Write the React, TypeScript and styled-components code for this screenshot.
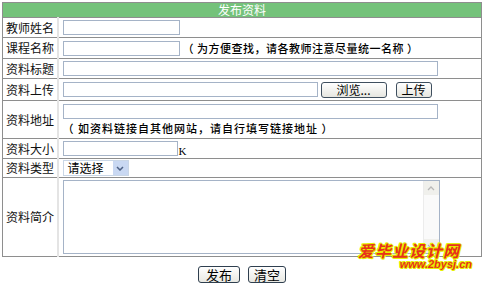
import React from "react";
import styled, { createGlobalStyle } from "styled-components";

const Global = createGlobalStyle`
  html, body { margin: 0; padding: 0; background: #fff; }
  body { font-family: "Noto Sans CJK SC", "Liberation Sans", sans-serif; font-size: 12px; color: #000; }
`;

const Page = styled.div`
  width: 484px;
  padding: 2px 2px 0 2px;
  box-sizing: border-box;
`;

const Wrap = styled.div`
  position: relative;
`;

const Table = styled.table`
  width: 480px;
  border-collapse: collapse;
  border: 1px solid #8e8e8e;
  table-layout: fixed;
`;

const LabelCol = styled.col`
  width: 55px;
`;

const HeadCell = styled.th`
  background: #74c27a;
  color: #fff;
  font-weight: normal;
  font-size: 12px;
  height: 14px;
  line-height: 14px;
  padding: 0;
  text-align: center;
  border-bottom: 1px solid #8e8e8e;
`;

const Row = styled.tr<{ $h: number }>`
  height: ${(p) => p.$h}px;
`;

const Label = styled.td`
  padding: 0 0 0 3px;
  border-right: 1px solid #8e8e8e;
  border-bottom: 1px solid #8e8e8e;
  white-space: nowrap;
  font-size: 12px;
  line-height: 14px;
  vertical-align: middle;
  overflow: hidden;
  color: #111;
`;

const Field = styled.td`
  padding: 0 0 0 4px;
  border-left: 2px solid #e4e4e4;
  border-bottom: 1px solid #8e8e8e;
  vertical-align: middle;
  font-size: 12px;
  line-height: 14px;
`;

const Line = styled.div<{ $gap?: number }>`
  display: flex;
  align-items: center;
  gap: ${(p) => p.$gap ?? 3}px;
`;

const Input = styled.input<{ $w: number }>`
  width: ${(p) => p.$w}px;
  height: 15px;
  box-sizing: border-box;
  border: 1px solid #a5b3c7;
  padding: 0;
  margin: 0;
  background: #fff;
  font-size: 12px;
  display: block;
`;

const Hint = styled.span<{ $ls: number }>`
  font-size: 11px;
  letter-spacing: ${(p) => p.$ls}px;
  white-space: nowrap;
  font-weight: 500;
`;

const HintLine = styled.div`
  margin-top: 2px;
  padding-left: 0;
`;

const Unit = styled.span`
  font-family: "Liberation Serif", serif;
  font-size: 11px;
  margin-top: 4px;
`;

const SmallBtn = styled.button<{ $w: number; $ml?: number }>`
  width: ${(p) => p.$w}px;
  margin-left: ${(p) => p.$ml ?? 0}px;
  height: 16px;
  box-sizing: border-box;
  border: 1px solid #3f4f5f;
  border-radius: 3px;
  background: linear-gradient(#ffffff, #e6e6e0);
  font-family: "Noto Sans CJK SC", sans-serif;
  font-size: 12px;
  line-height: 12px;
  padding: 0;
  color: #000;
  white-space: nowrap;
`;

const Select = styled.div`
  width: 66px;
  height: 16px;
  display: flex;
  align-items: center;
  justify-content: space-between;
  box-sizing: border-box;
  padding-left: 4px;
  font-size: 12px;
  border: 1px solid #c9d6e6;
`;

const Arrow = styled.span`
  width: 15px;
  height: 14px;
  background: #c9d8f2;
  display: flex;
  align-items: center;
  justify-content: center;
`;

const TextArea = styled.div`
  width: 377px;
  height: 74px;
  box-sizing: border-box;
  border: 1px solid #a5b3c7;
  display: flex;
  justify-content: flex-end;
`;

const ScrollBar = styled.div`
  width: 15px;
  height: 100%;
  border-left: 1px solid #ececec;
  display: flex;
  flex-direction: column;
  justify-content: space-between;
  background: #fafafa;
`;

const ScrollBtn = styled.div`
  height: 14px;
  background: #f0f0ec;
  display: flex;
  align-items: center;
  justify-content: center;
`;

const Actions = styled.div`
  display: flex;
  justify-content: center;
  gap: 8px;
  padding-top: 9px;
  height: 30px;
  box-sizing: border-box;
`;

const BigBtn = styled.button<{ $w: number }>`
  width: ${(p) => p.$w}px;
  height: 17px;
  box-sizing: border-box;
  border: 1px solid #2f3f4f;
  border-radius: 3px;
  background: linear-gradient(#ffffff, #e8e8e2);
  font-family: "Noto Sans CJK SC", sans-serif;
  font-size: 13px;
  line-height: 13px;
  padding: 0;
  color: #000;
`;

const Watermark = styled.div`
  position: absolute;
  left: 356px;
  top: 240px;
  display: flex;
  flex-direction: column;
  align-items: flex-end;
  color: #e8321a;
  text-shadow: 1px 0 0 #e6f000, -1px 0 0 #e6f000, 0 1px 0 #e6f000, 0 -1px 0 #e6f000, 1px 1px 0 #e6f000, -1px -1px 0 #e6f000;
  font-weight: bold;
  pointer-events: none;
`;

const WmTitle = styled.div`
  font-family: "Noto Sans CJK SC", sans-serif;
  font-size: 16px;
  line-height: 17px;
  letter-spacing: 1px;
  font-style: italic;
`;

const WmUrl = styled.div`
  font-family: "Liberation Sans", sans-serif;
  font-size: 11px;
  line-height: 11px;
  font-style: italic;
  margin-right: -12px;
`;

export default function App() {
  return (
    <>
      <Global />
      <Page>
        <Wrap>
          <Table>
            <colgroup>
              <LabelCol />
              <col />
            </colgroup>
            <thead>
              <tr>
                <HeadCell colSpan={2}>发布资料</HeadCell>
              </tr>
            </thead>
            <tbody>
              <Row $h={20}>
                <Label>教师姓名</Label>
                <Field><Input $w={117} /></Field>
              </Row>
              <Row $h={21}>
                <Label>课程名称</Label>
                <Field>
                  <Line>
                    <Input $w={117} />
                    <Hint $ls={0.5}>（ 为方便查找，请各教师注意尽量统一名称 ）</Hint>
                  </Line>
                </Field>
              </Row>
              <Row $h={20}>
                <Label>资料标题</Label>
                <Field><Input $w={375} /></Field>
              </Row>
              <Row $h={22}>
                <Label>资料上传</Label>
                <Field>
                  <Line>
                    <Input $w={255} />
                    <SmallBtn $w={66}>浏览...</SmallBtn>
                    <SmallBtn $w={36} $ml={6}>上传</SmallBtn>
                  </Line>
                </Field>
              </Row>
              <Row $h={38}>
                <Label>资料地址</Label>
                <Field>
                  <Input $w={375} />
                  <HintLine>
                    <Hint $ls={1}>（ 如资料链接自其他网站，请自行填写链接地址 ）</Hint>
                  </HintLine>
                </Field>
              </Row>
              <Row $h={20}>
                <Label>资料大小</Label>
                <Field>
                  <Line $gap={1}>
                    <Input $w={115} />
                    <Unit>K</Unit>
                  </Line>
                </Field>
              </Row>
              <Row $h={19}>
                <Label>资料类型</Label>
                <Field>
                  <Select>
                    <span>请选择</span>
                    <Arrow>
                      <svg width="8" height="5" viewBox="0 0 8 5">
                        <path d="M1 1 L4 4 L7 1" fill="none" stroke="#4d6185" strokeWidth="1.5" />
                      </svg>
                    </Arrow>
                  </Select>
                </Field>
              </Row>
              <Row $h={79}>
                <Label>资料简介</Label>
                <Field>
                  <TextArea>
                    <ScrollBar>
                      <ScrollBtn>
                        <svg width="8" height="5" viewBox="0 0 8 5">
                          <path d="M1 4 L4 1 L7 4" fill="none" stroke="#b8b8b8" strokeWidth="1.3" />
                        </svg>
                      </ScrollBtn>
                      <ScrollBtn>
                        <svg width="8" height="5" viewBox="0 0 8 5">
                          <path d="M1 1 L4 4 L7 1" fill="none" stroke="#b8b8b8" strokeWidth="1.3" />
                        </svg>
                      </ScrollBtn>
                    </ScrollBar>
                  </TextArea>
                </Field>
              </Row>
            </tbody>
          </Table>
          <Actions>
            <BigBtn $w={42}>发布</BigBtn>
            <BigBtn $w={38}>清空</BigBtn>
          </Actions>
          <Watermark>
            <WmTitle>爱毕业设计网</WmTitle>
            <WmUrl>www.2bysj.cn</WmUrl>
          </Watermark>
        </Wrap>
      </Page>
    </>
  );
}
